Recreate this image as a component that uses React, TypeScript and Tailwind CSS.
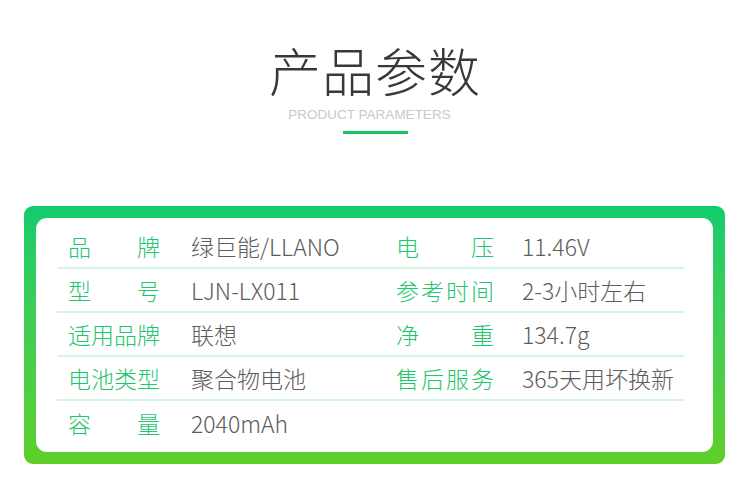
const rows: [string, string, string, string][] = [
  ["品牌", "绿巨能/LLANO", "电压", "11.46V"],
  ["型号", "LJN-LX011", "参考时间", "2-3小时左右"],
  ["适用品牌", "联想", "净重", "134.7g"],
  ["电池类型", "聚合物电池", "售后服务", "365天用坏换新"],
  ["容量", "2040mAh", "", ""],
]

function Label({ text, width }: { text: string; width: string }) {
  return (
    <div className={`flex justify-between text-[#1ec66c] ${width}`}>
      {text.split("").map((c, i) => (
        <span key={i}>{c}</span>
      ))}
    </div>
  )
}

export default function App() {
  return (
    <div
      className="w-[750px] h-[484px] bg-white overflow-hidden"
      style={{ fontFamily: '"Noto Sans CJK SC", "Noto Sans", sans-serif' }}
    >
      <div className="flex flex-col items-center pt-[40px]">
        <h1 className="text-[52px] leading-[60px] font-extralight text-[#383838] tracking-[1px]">产品参数</h1>
        <p className="mt-[7px] mr-[11px] text-[13.5px] leading-[16px] text-[#c9c9c9] font-['Liberation_Sans',sans-serif]">
          PRODUCT PARAMETERS
        </p>
        <div className="mt-[8px] w-[65px] h-[3px] bg-[#17c465]" />
      </div>

      <div className="mt-[72px] mx-[24px] w-[701px] h-[258px] rounded-[9px] p-[12px] bg-gradient-to-b from-[#0ecc6c] to-[#5ecf27]">
        <div className="h-full rounded-[11px] bg-white pl-[21px] pr-[29px] pt-[7px]">
          {rows.map((r, i) => (
            <div
              key={i}
              className={`flex h-[44px] items-center text-[23px] font-extralight ${
                i < 4 ? "border-b-2 border-[#d2f6e5]" : ""
              }`}
            >
              <div className="flex w-[313px] items-center pl-[11px]">
                <Label text={r[0]} width="w-[92px]" />
                <span className="ml-[31px] text-[#5c5c5c]">{r[1]}</span>
              </div>
              {r[2] && (
                <div className="flex items-center pl-[26px]">
                  <Label text={r[2]} width="w-[98px]" />
                  <span className="ml-[28px] text-[#5c5c5c]">{r[3]}</span>
                </div>
              )}
            </div>
          ))}
        </div>
      </div>
    </div>
  )
}
